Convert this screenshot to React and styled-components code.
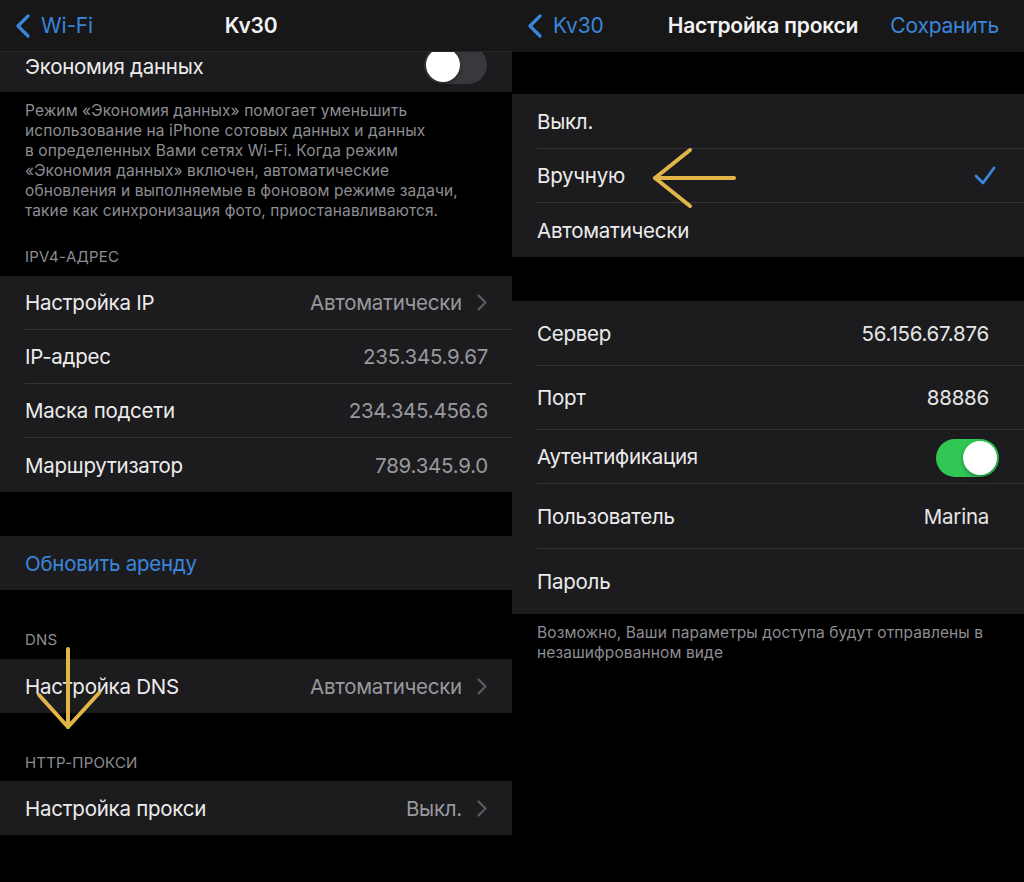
import React from "react";
import styled, { createGlobalStyle } from "styled-components";

const GlobalStyle = createGlobalStyle`
  html, body {
    margin: 0;
    padding: 0;
    background: #000;
  }
  body {
    font-family: Inter, "Noto Sans", "Liberation Sans", sans-serif;
    -webkit-font-smoothing: antialiased;
  }
`;

const Screen = styled.div`
  display: grid;
  grid-template-columns: 512px 512px;
  width: 1024px;
  height: 882px;
  overflow: hidden;
  background: #000;
`;

const Panel = styled.div`
  position: relative;
  display: flex;
  flex-direction: column;
  overflow: hidden;
  background: #000;
`;

const NavBar = styled.div`
  position: relative;
  z-index: 2;
  display: grid;
  grid-template-columns: 1fr auto 1fr;
  align-items: center;
  height: 52px;
  flex-shrink: 0;
  padding: 0 25px 0 15px;
  background: #171717;
  border-bottom: 1px solid ${(p) => (p.$border ? "#262628" : "#171717")};
  box-sizing: border-box;
`;

const BackButton = styled.div`
  display: flex;
  align-items: center;
  gap: 10px;
  color: #3a86dc;
  font-size: 21px;
  letter-spacing: -0.2px;
`;

const NavTitle = styled.div`
  color: #f2f2f2;
  font-size: 21px;
  font-weight: 600;
  letter-spacing: -0.2px;
`;

const NavAction = styled.div`
  justify-self: end;
  color: #3a86dc;
  font-size: 21px;
  letter-spacing: -0.2px;
`;

const Spacer = styled.div`
  height: ${(p) => p.$h}px;
  flex-shrink: 0;
`;

const Group = styled.div`
  background: #1c1c1e;
  flex-shrink: 0;
  & > div:last-child > div {
    border-bottom: none;
  }
`;

const Row = styled.div`
  display: flex;
  height: ${(p) => p.$h || 54}px;
  padding-left: 25px;
  overflow: hidden;
  box-sizing: border-box;
`;

const RowInner = styled.div`
  flex: 1;
  display: flex;
  align-items: center;
  padding-right: ${(p) => (p.$pr != null ? p.$pr : 24)}px;
  padding-bottom: ${(p) => p.$pb || 0}px;
  border-bottom: 1px solid #343436;
`;

const Label = styled.div`
  flex: 1;
  color: ${(p) => (p.$link ? "#3a86dc" : "#ececec")};
  font-size: 20.5px;
  letter-spacing: -0.25px;
`;

const Value = styled.div`
  color: #98989d;
  font-size: 20.5px;
  letter-spacing: -0.25px;
  margin-right: ${(p) => p.$mr || 0}px;
`;

const FieldValue = styled.div`
  color: #e6e6e6;
  font-size: 20.5px;
  letter-spacing: -0.25px;
  margin-right: 10px;
`;

const ChevronBox = styled.svg`
  width: 10px;
  height: 17px;
  margin-left: 15px;
  margin-right: 1px;
`;

const Note = styled.div`
  padding: ${(p) => p.$pt || 9}px 25px 0;
  color: #8d8d92;
  font-size: 15.5px;
  line-height: 20px;
  letter-spacing: 0.1px;
  flex-shrink: 0;
`;

const SectionHeader = styled.div`
  display: flex;
  align-items: flex-end;
  height: ${(p) => p.$h}px;
  padding: 0 25px ${(p) => p.$pb || 9}px;
  box-sizing: border-box;
  color: #8d8d92;
  font-size: 15px;
  line-height: 20px;
  letter-spacing: 0.2px;
  flex-shrink: 0;
`;

const Track = styled.div`
  position: relative;
  width: 63px;
  height: 38px;
  border-radius: 19px;
  background: ${(p) => (p.$on ? "#30c755" : "#39393d")};
  flex-shrink: 0;
  margin-top: ${(p) => p.$mt || 0}px;
`;

const Knob = styled.div`
  position: absolute;
  top: 2px;
  left: ${(p) => (p.$on ? 27 : 2)}px;
  width: 34px;
  height: 34px;
  border-radius: 50%;
  background: #fff;
  box-shadow: 0 2px 4px rgba(0, 0, 0, 0.35);
`;

const Annotation = styled.svg`
  position: absolute;
  left: 0;
  top: 0;
  width: 512px;
  height: 882px;
  pointer-events: none;
  z-index: 3;
`;

const Chevron = () => (
  <ChevronBox viewBox="0 0 10 17">
    <polyline
      points="1.5,1.5 8.5,8.5 1.5,15.5"
      fill="none"
      stroke="#5b5b60"
      strokeWidth="2.2"
      strokeLinecap="round"
      strokeLinejoin="round"
    />
  </ChevronBox>
);

const BackChevron = () => (
  <svg width="16" height="24" viewBox="0 0 16 24">
    <polyline
      points="13,2 3,12 13,22"
      fill="none"
      stroke="#3a86dc"
      strokeWidth="3.2"
      strokeLinecap="round"
      strokeLinejoin="round"
    />
  </svg>
);

const Check = () => (
  <svg width="22" height="20" viewBox="0 0 22 20">
    <polyline
      points="2,10 9,17 20,2"
      fill="none"
      stroke="#3a86dc"
      strokeWidth="2.8"
      strokeLinecap="round"
      strokeLinejoin="round"
    />
  </svg>
);

const Toggle = ({ on, mt }) => (
  <Track $on={on} $mt={mt}>
    <Knob $on={on} />
  </Track>
);

const ARROW = "#e2b548";

const InfoRow = ({ label, value, chevron, link }) => (
  <Row>
    <RowInner>
      <Label $link={link}>{label}</Label>
      {value && <Value>{value}</Value>}
      {chevron && <Chevron />}
    </RowInner>
  </Row>
);

const App = () => {
  return (
    <>
      <GlobalStyle />
      <Screen>
        <Panel>
          <NavBar $border>
            <BackButton>
              <BackChevron />
              Wi-Fi
            </BackButton>
            <NavTitle>Kv30</NavTitle>
            <div />
          </NavBar>
          <Group>
            <Row $h={40}>
              <RowInner $pb={12} $pr={25}>
                <Label>Экономия данных</Label>
                <Toggle on={false} mt={-2} />
              </RowInner>
            </Row>
          </Group>
          <Note>
            Режим «Экономия данных» помогает уменьшить
            <br />
            использование на iPhone сотовых данных и данных
            <br />
            в определенных Вами сетях Wi-Fi. Когда режим
            <br />
            «Экономия данных» включен, автоматические
            <br />
            обновления и выполняемые в фоновом режиме задачи,
            <br />
            такие как синхронизация фото, приостанавливаются.
          </Note>
          <SectionHeader $h={55}>IPV4-АДРЕС</SectionHeader>
          <Group>
            <InfoRow label="Настройка IP" value="Автоматически" chevron />
            <InfoRow label="IP-адрес" value="235.345.9.67" />
            <InfoRow label="Маска подсети" value="234.345.456.6" />
            <InfoRow label="Маршрутизатор" value="789.345.9.0" />
          </Group>
          <Spacer $h={44} />
          <Group>
            <InfoRow label="Обновить аренду" link />
          </Group>
          <SectionHeader $h={69}>DNS</SectionHeader>
          <Group>
            <InfoRow label="Настройка DNS" value="Автоматически" chevron />
          </Group>
          <SectionHeader $h={68} $pb={8}>
            HTTP-ПРОКСИ
          </SectionHeader>
          <Group>
            <InfoRow label="Настройка прокси" value="Выкл." chevron />
          </Group>
          <Annotation viewBox="0 0 512 882">
            <g
              fill="none"
              stroke={ARROW}
              strokeWidth="4"
              strokeLinecap="round"
              strokeLinejoin="round"
            >
              <line x1="68" y1="649" x2="68" y2="727" />
              <polyline points="39,695 68,727 99,693" />
            </g>
          </Annotation>
        </Panel>

        <Panel>
          <NavBar>
            <BackButton>
              <BackChevron />
              Kv30
            </BackButton>
            <NavTitle>Настройка прокси</NavTitle>
            <NavAction>Сохранить</NavAction>
          </NavBar>
          <Spacer $h={42} />
          <Group>
            <Row $h={55}>
              <RowInner $pr={25}>
                <Label>Выкл.</Label>
              </RowInner>
            </Row>
            <Row $h={54}>
              <RowInner $pr={28}>
                <Label>Вручную</Label>
                <Check />
              </RowInner>
            </Row>
            <Row $h={54}>
              <RowInner $pr={25}>
                <Label>Автоматически</Label>
              </RowInner>
            </Row>
          </Group>
          <Spacer $h={44} />
          <Group>
            <Row $h={65}>
              <RowInner $pr={25}>
                <Label>Сервер</Label>
                <FieldValue>56.156.67.876</FieldValue>
              </RowInner>
            </Row>
            <Row $h={64}>
              <RowInner $pr={25}>
                <Label>Порт</Label>
                <FieldValue>88886</FieldValue>
              </RowInner>
            </Row>
            <Row $h={54}>
              <RowInner $pr={25}>
                <Label>Аутентификация</Label>
                <Toggle on mt={2} />
              </RowInner>
            </Row>
            <Row $h={65}>
              <RowInner $pr={25}>
                <Label>Пользователь</Label>
                <FieldValue>Marina</FieldValue>
              </RowInner>
            </Row>
            <Row $h={65}>
              <RowInner $pr={25}>
                <Label>Пароль</Label>
              </RowInner>
            </Row>
          </Group>
          <Note $pt={9}>
            Возможно, Ваши параметры доступа будут отправлены в
            <br />
            незашифрованном виде
          </Note>
          <Annotation viewBox="0 0 512 882">
            <g
              fill="none"
              stroke={ARROW}
              strokeWidth="4"
              strokeLinecap="round"
              strokeLinejoin="round"
            >
              <line x1="143" y1="178" x2="222" y2="178" />
              <polyline points="178,150 143,178 178,206" />
            </g>
          </Annotation>
        </Panel>
      </Screen>
    </>
  );
};

export default App;
